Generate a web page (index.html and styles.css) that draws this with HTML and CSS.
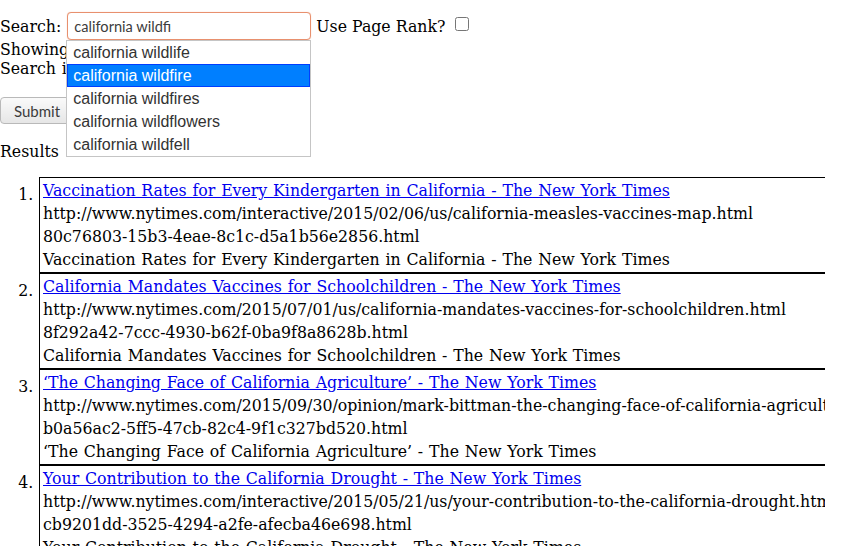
FILE: index.html
```html
<!DOCTYPE html>
<html>
<head>
<meta charset="utf-8">
<link rel="stylesheet" href="styles.css">
</head>
<body>
<form class="search-form">
  <div class="search-row">
    <label class="lbl">Search:</label>
    <span class="input-wrap">
      <input class="q" type="text" value="california wildfi">
      <ul class="ac-menu">
        <li class="ac-item">california wildlife</li>
        <li class="ac-item active">california wildfire</li>
        <li class="ac-item">california wildfires</li>
        <li class="ac-item">california wildflowers</li>
        <li class="ac-item">california wildfell</li>
      </ul>
    </span>
    <label class="lbl">Use Page Rank?</label>
    <input class="chk" type="checkbox">
  </div>
  <div class="info">Showing 10 results</div>
  <div class="info">Search in 0.02 s</div>
  <div class="btn-row"><button class="submit" type="button">Submit</button></div>
</form>
<div class="results-head">Results 1 - 10</div>
<ol class="results">
  <li>
    <table class="item"><tr><td><a href="#">Vaccination Rates for Every Kindergarten in California - The New York Times</a></td></tr>
    <tr><td>http://www.nytimes.com/interactive/2015/02/06/us/california-measles-vaccines-map.html</td></tr>
    <tr><td>80c76803-15b3-4eae-8c1c-d5a1b56e2856.html</td></tr>
    <tr><td>Vaccination Rates for Every Kindergarten in California - The New York Times</td></tr></table>
  </li>
  <li>
    <table class="item"><tr><td><a href="#">California Mandates Vaccines for Schoolchildren - The New York Times</a></td></tr>
    <tr><td>http://www.nytimes.com/2015/07/01/us/california-mandates-vaccines-for-schoolchildren.html</td></tr>
    <tr><td>8f292a42-7ccc-4930-b62f-0ba9f8a8628b.html</td></tr>
    <tr><td>California Mandates Vaccines for Schoolchildren - The New York Times</td></tr></table>
  </li>
  <li>
    <table class="item"><tr><td><a href="#">‘The Changing Face of California Agriculture’ - The New York Times</a></td></tr>
    <tr><td>http://www.nytimes.com/2015/09/30/opinion/mark-bittman-the-changing-face-of-california-agriculture.html</td></tr>
    <tr><td>b0a56ac2-5ff5-47cb-82c4-9f1c327bd520.html</td></tr>
    <tr><td>‘The Changing Face of California Agriculture’ - The New York Times</td></tr></table>
  </li>
  <li>
    <table class="item"><tr><td><a href="#">Your Contribution to the California Drought - The New York Times</a></td></tr>
    <tr><td>http://www.nytimes.com/interactive/2015/05/21/us/your-contribution-to-the-california-drought.html</td></tr>
    <tr><td>cb9201dd-3525-4294-a2fe-afecba46e698.html</td></tr>
    <tr><td>Your Contribution to the California Drought - The New York Times</td></tr></table>
  </li>
</ol>
</body>
</html>
```
FILE: styles.css
```css
html, body {
  margin: 0;
  padding: 0;
  background: #fff;
}
body {
  font-family: "DejaVu Serif", serif;
  font-size: 15.75px;
  word-spacing: 0.8px;
  color: #000;
  overflow: hidden;
}
.search-form {
  margin: 0;
  padding-top: 12px;
}
.search-row {
  display: flex;
  align-items: center;
  height: 28px;
}
.lbl {
  margin-right: 5px;
}
.input-wrap {
  position: relative;
  display: inline-block;
  margin-right: 0;
  height: 28px;
}
.lbl + .input-wrap {
  margin-left: 1px;
}
.input-wrap + .lbl {
  margin-left: 5px;
  margin-right: 10px;
  word-spacing: 0;
}
.q {
  box-sizing: border-box;
  width: 244px;
  height: 28px;
  margin: 0;
  padding: 0 6px;
  border: 1px solid #e8906e;
  border-radius: 4px;
  box-shadow: 0 0 1px #f0b9a0;
  font-family: Lato, sans-serif;
  font-size: 14.6px;
  word-spacing: 0;
  color: #3c3c3c;
  outline: none;
  background: #fff;
}
.chk {
  margin: -4px 0 0 0;
  width: 14px;
  height: 14px;
}
.ac-menu {
  position: absolute;
  left: -1px;
  top: 28px;
  width: 243px;
  margin: 0;
  padding: 0;
  list-style: none;
  border: 1px solid #c5c5c5;
  background: #fff;
  z-index: 10;
  word-spacing: 0;
}
.ac-item {
  font-family: "Liberation Sans", Arial, sans-serif;
  font-size: 16px;
  line-height: 17px;
  color: #333;
  padding: 3px 1em 3px 6px;
}
.ac-item.active {
  background: #007fff;
  outline: 1px solid #003eff;
  outline-offset: -1px;
  color: #fff;
}
.info {
  line-height: 19px;
}
.info:first-of-type {
  margin-top: 1px;
}
.btn-row {
  padding-top: 19px;
}
.submit {
  height: 27px;
  padding: 0 13px;
  font-family: Lato, sans-serif;
  font-size: 15px;
  color: #3c3c3c;
  border: 1px solid #b9b9b9;
  border-radius: 4px;
  background: linear-gradient(#fafafa, #e6e6e6);
  margin: 0;
}
.results-head {
  margin-top: 18px;
  line-height: 19px;
}
.results {
  width: 825px;
  overflow: hidden;
  margin: 16px 0 0 0;
  padding-left: 39px;
  box-sizing: border-box;
}
.results li {
  padding: 0;
}
.item {
  width: calc(100% + 10px);
  border: 1px solid #000;
  border-spacing: 2px;
  white-space: nowrap;
}
.item td {
  padding: 1px;
  line-height: 19px;
}
.item a {
  color: #0000ee;
}
```
